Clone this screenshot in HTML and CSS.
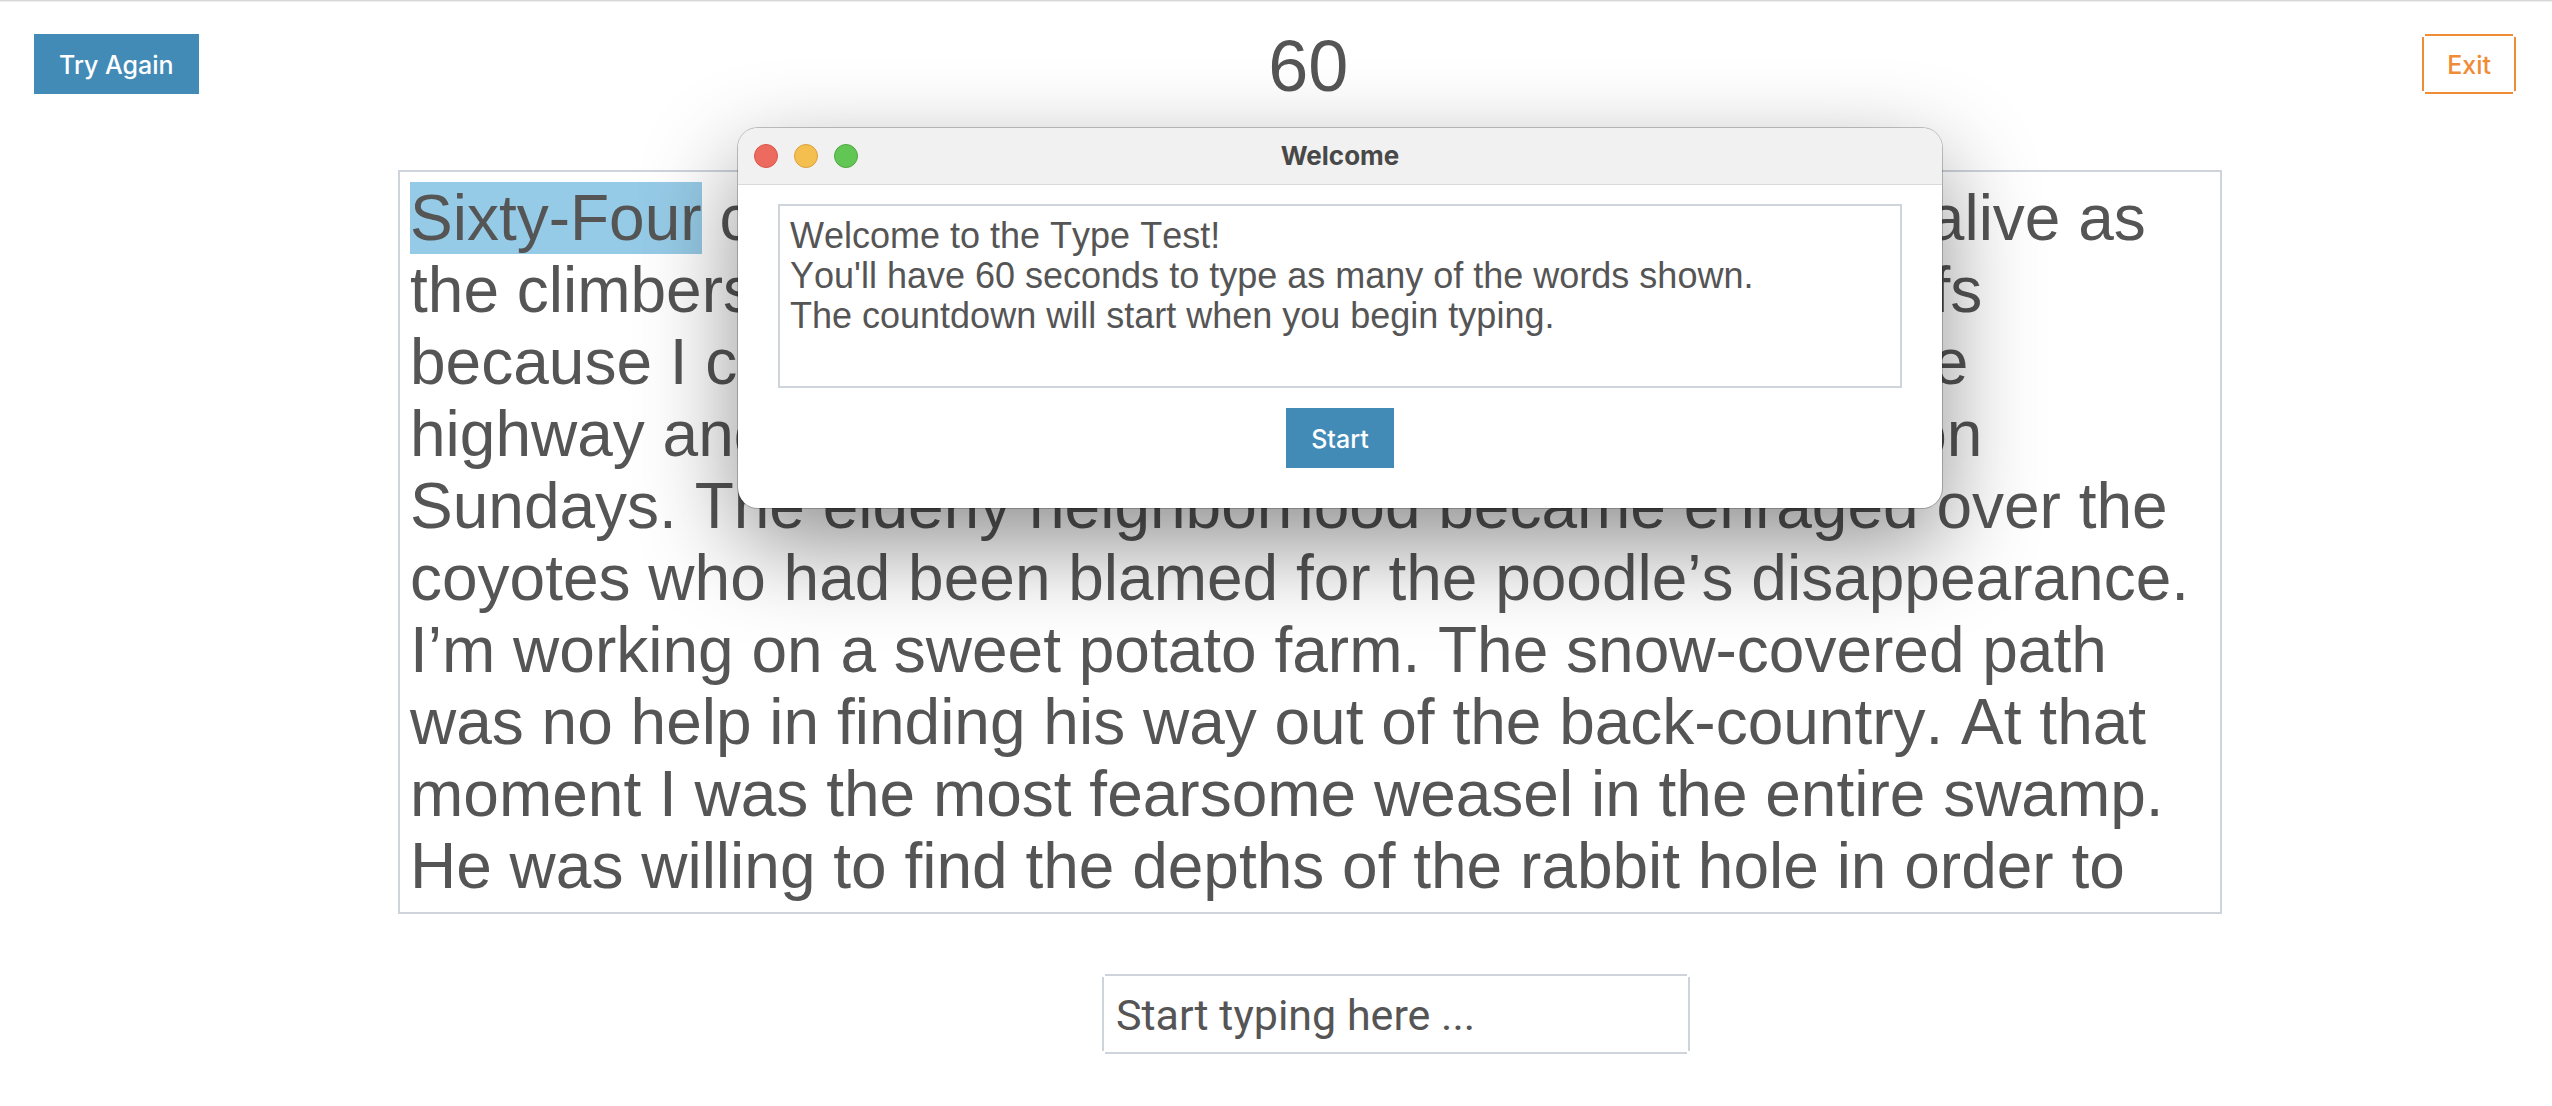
FILE: index.html
```
<!DOCTYPE html>
<html lang="en">
<head>
  <meta charset="utf-8">
  <title>Type Test</title>
  <link rel="stylesheet" href="styles.css">
</head>
<body>
  <header class="toolbar">
    <button type="button" class="button button-primary">Try Again</button>
    <output class="countdown" aria-label="Seconds left">60</output>
    <button type="button" class="button button-outline">Exit</button>
  </header>

  <main class="test">
    <p class="passage"><mark class="current-word">Sixty-Four</mark> comes asking for bread. The glacier came alive as the climbers hiked closer. I always buy whole dark loafs because I can’t cut them. The overpass went under the highway and into a secret world. I am never at home on Sundays. The elderly neighborhood became enraged over the coyotes who had been blamed for the poodle’s disappearance. I’m working on a sweet potato farm. The snow-covered path was no help in finding his way out of the back-country. At that moment I was the most fearsome weasel in the entire swamp. He was willing to find the depths of the rabbit hole in order to</p>
    <input class="entry" type="text" value="Start typing here ..." aria-label="Type the words">
  </main>

  <section class="dialog" role="dialog" aria-labelledby="dialog-title">
    <div class="titlebar">
      <div class="window-controls">
        <button type="button" class="dot dot-close" aria-label="Close"></button>
        <button type="button" class="dot dot-minimize" aria-label="Minimize"></button>
        <button type="button" class="dot dot-zoom" aria-label="Zoom"></button>
      </div>
      <h1 class="dialog-title" id="dialog-title">Welcome</h1>
    </div>
    <div class="dialog-body">
      <p class="message">Welcome to the Type Test!<br>You'll have 60 seconds to type as many of the words shown.<br>The countdown will start when you begin typing.</p>
      <button type="button" class="button button-primary">Start</button>
    </div>
  </section>
</body>
</html>
```
FILE: styles.css
```
:root {
  --ink: #555;
  --line: #ced4da;
  --blue: #428bb7;
  --orange: #f08b37;
  --text: "Liberation Sans", Arial, sans-serif;
  --ui: Inter, "Liberation Sans", sans-serif;
}

* {
  box-sizing: border-box;
}

body {
  position: relative;
  min-height: 100vh;
  margin: 0;
  background: #fff;
  border-top: 1px solid #d8d8d8;
  color: var(--ink);
  font-family: var(--text);
  font-kerning: none;
}

.toolbar {
  display: grid;
  grid-template-columns: auto 1fr auto;
  align-items: center;
  padding: 32px 36px 0 34px;
  border-top: 1px solid #eee;
}

.countdown {
  padding: 4px 4px 0 0;
  font-size: 72px;
  line-height: 56px;
  text-align: center;
}

.button {
  height: 60px;
  padding: 1px 25px 0;
  border: 0;
  font: 500 25px/60px var(--ui);
}

.button-primary {
  background: var(--blue);
  color: #fff;
}

/* Thin frame whose four sides stop short of the corners */
.button-outline,
.entry {
  background:
    linear-gradient(var(--frame), var(--frame)) top / calc(100% - 6px) 2px,
    linear-gradient(var(--frame), var(--frame)) bottom / calc(100% - 6px) 2px,
    linear-gradient(var(--frame), var(--frame)) left / 2px calc(100% - 6px),
    linear-gradient(var(--frame), var(--frame)) right / 2px calc(100% - 6px);
  background-repeat: no-repeat;
}

.button-outline {
  --frame: var(--orange);
  color: var(--orange);
}

.test {
  display: grid;
  grid-template-columns: 398fr 1824fr 330fr;
  padding-top: 76px;
  row-gap: 60px;
}

.passage {
  grid-column: 2;
  height: 744px;
  margin: 0;
  padding: 10px;
  overflow: hidden;
  border: 2px solid var(--line);
  font-size: 64px;
  line-height: 72px;
}

.current-word {
  display: inline-block;
  background: #96cbe7;
  color: inherit;
}

.entry {
  --frame: var(--line);
  grid-column: 2;
  justify-self: center;
  width: 588px;
  height: 80px;
  margin-left: 172px;
  padding: 2px 14px 0;
  border: 0;
  color: var(--ink);
  font: 400 43px/48px Roboto, var(--ui);
}

.dialog {
  position: absolute;
  top: 127px;
  left: calc(50% - 538px);
  width: 1204px;
  overflow: hidden;
  border-radius: 20px;
  background: #fff;
  box-shadow: 0 0 0 1px rgba(0, 0, 0, 0.22), 0 36px 96px rgba(0, 0, 0, 0.44);
}

.titlebar {
  display: grid;
  grid-template-columns: 1fr auto 1fr;
  align-items: center;
  height: 57px;
  padding: 0 16px;
  border-bottom: 1px solid #d9d9d9;
  background: #f1f1f1;
}

.window-controls {
  display: flex;
  gap: 16px;
}

.dot {
  width: 24px;
  height: 24px;
  padding: 0;
  border: 1px solid;
  border-radius: 50%;
}

.dot-close {
  background: #ed6a5e;
  border-color: #d95448;
}

.dot-minimize {
  background: #f5bf4f;
  border-color: #d9a13c;
}

.dot-zoom {
  background: #62c655;
  border-color: #4fa73e;
}

.dialog-title {
  margin: 0;
  color: #484848;
  font: 700 26px/32px var(--ui);
}

.dialog-body {
  display: flex;
  flex-direction: column;
  align-items: center;
  gap: 20px;
  padding: 19px 40px 40px;
}

.message {
  align-self: stretch;
  height: 184px;
  margin: 0;
  padding: 10px;
  border: 2px solid var(--line);
  font-size: 36px;
  line-height: 40px;
}
```
